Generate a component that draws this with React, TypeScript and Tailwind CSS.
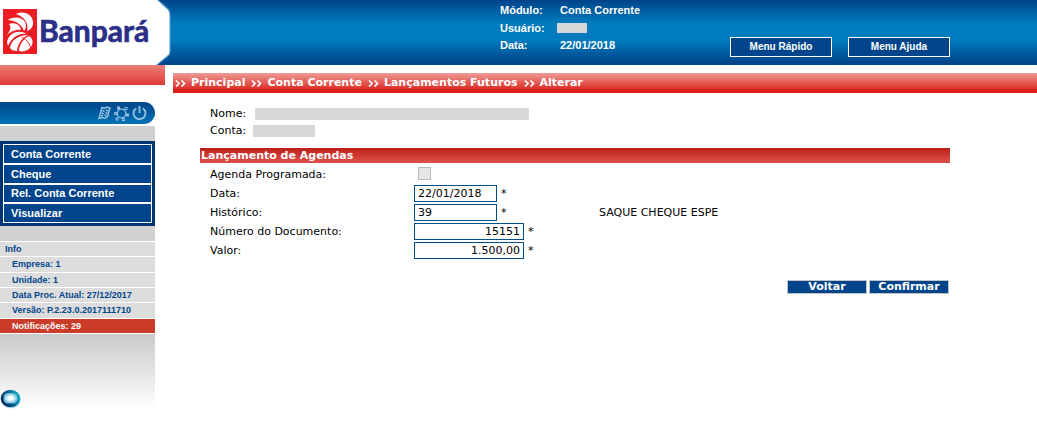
import { useState } from "react";

const crumbs = ["Principal", "Conta Corrente", "Lançamentos Futuros", "Alterar"];
const menu = ["Conta Corrente", "Cheque", "Rel. Conta Corrente", "Visualizar"];
const info = ["Empresa: 1", "Unidade: 1", "Data Proc. Atual: 27/12/2017", "Versão: P.2.23.0.2017111710"];

function Logo() {
  return (
    <svg width="171" height="65" viewBox="0 0 171 65" className="block shrink-0" role="img" aria-label="Banpará">
      <path d="M0 0H159L169 9Q170.500 11 170.500 15V51Q170.500 54 169 56L158 65H0Z" fill="#7fb6dc" opacity="0.6" />
      <path d="M0 0H157L168 10Q169.500 12 169.500 15V51Q169.500 54 168 55L156 65H0Z" fill="#fff" />
      <rect x="3" y="9" width="34" height="45" fill="#ed1c24" />
      <path d="M16 14C24 10 34 15 33 24C33 27 30 30 27 31C29 24 25 17 16 14Z" fill="#fff" />
      <path d="M8 20C16 15 25 18 26 25C26 28 25 30 24 31C22 25 17 21 8 20Z" fill="#fff" />
      <path d="M9 24C15 22 20 25 21 30C16 29 10 32 7 35C10 31 12 27 9 24Z" fill="#fff" />
      <path d="M7 42C9 33 18 29 27 34C19 33 12 37 8 46Z" fill="#fff" />
      <path d="M10 48C11 40 19 35 28 35C22 38 18 43 17 51C14 51 11 50 10 48Z" fill="#fff" />
      <path d="M19 51C19 45 23 39 29 36C33 38 34 44 30 48C27 51 23 52 19 51Z" fill="#fff" />
      <path d="M22 37C27 40 30 44 31 49" fill="none" stroke="#ed1c24" strokeWidth="1" />
      <text x="39" y="42" fontFamily="Lato, sans-serif" fontSize="30" fontWeight="700" fill="#2b2f87" stroke="#2b2f87" strokeWidth="0.7">
        Banpará
      </text>
    </svg>
  );
}

function NotesIcon() {
  return (
    <svg width="13" height="14" viewBox="0 0 13 14" fill="none" stroke="#91c2e2">
      <path d="M4 1.500 6.500 2.500 8.500 1 12 2 9.500 10.500 7 12.500 4 11.500 1 12.500 2.500 7Z" strokeWidth="1.500" />
      <path d="M4.500 4.500 6.500 5.500M8 4 10 5M3.800 7 5.800 8M7.500 6.500 9.500 7.500M3 9.500 5 10M6.500 9 8.500 10" strokeWidth="1.700" />
    </svg>
  );
}

function NetworkIcon() {
  return (
    <svg width="15" height="15" viewBox="0 0 15 15" fill="none" stroke="#91c2e2">
      <circle cx="7.500" cy="7.500" r="4.300" strokeWidth="1.300" />
      <g fill="#05589d" strokeWidth="1">
        <rect x="3.500" y="1" width="2" height="2" />
        <rect x="11" y="1.500" width="2" height="2" />
        <rect x="0.500" y="6.500" width="2" height="2" />
        <rect x="12.500" y="8" width="2" height="2" />
        <rect x="2" y="12" width="2" height="2" />
        <rect x="8.500" y="12.500" width="2" height="2" />
      </g>
    </svg>
  );
}

function PowerIcon() {
  return (
    <svg width="15" height="15" viewBox="0 0 15 15" fill="none" stroke="#91c2e2" strokeWidth="1.900">
      <path d="M4.300 2.200A6 6 0 1 0 10.700 2.200M7.500 0V7" />
    </svg>
  );
}

function Globe() {
  return (
    <svg width="21" height="20" viewBox="0 0 21 20" className="block">
      <defs>
        <linearGradient id="rim" x1="0" y1="0.7" x2="1" y2="0.3">
          <stop offset="0" stopColor="#041c58" />
          <stop offset="0.5" stopColor="#04608c" />
          <stop offset="1" stopColor="#12b4cc" />
        </linearGradient>
        <radialGradient id="glow">
          <stop offset="0.3" stopColor="#fff" />
          <stop offset="0.7" stopColor="#a5dcea" />
          <stop offset="1" stopColor="#5fb4cf" />
        </radialGradient>
      </defs>
      <ellipse cx="11" cy="10.500" rx="10" ry="9" fill="#bfe3ec" />
      <ellipse cx="10.500" cy="9.500" rx="9.800" ry="8.700" fill="url(#rim)" />
      <rect x="3.500" y="4" width="14" height="10.500" rx="4.500" fill="url(#glow)" />
    </svg>
  );
}

const field = "h-[17px] border border-[#00508f] bg-white px-[3px] text-[11px] leading-[15px] text-black outline-none";
const topButton = "h-5 w-[102px] border border-white bg-[#00448b] text-[10px] leading-[18px] font-bold";
const action = "h-[14px] w-20 border border-[#c4c4c4] bg-[#00448b] text-[11px] leading-3 font-bold text-white";

export default function App() {
  const [date, setDate] = useState("22/01/2018");
  const [history, setHistory] = useState("39");
  const [doc, setDoc] = useState("15151");
  const [value, setValue] = useState("1.500,00");

  return (
    <div className="bg-white font-['Liberation_Sans',Arial,sans-serif] text-black">
      <header className="flex h-[65px] bg-[linear-gradient(#00448b,#007bbd_36%,#007bbd_62%,#00448b_97%)] text-[11px] font-bold text-white">
        <Logo />
        <dl className="ml-[329px] grid w-[230px] shrink-0 grid-cols-[60px_1fr] content-start pt-[2px] leading-[17px]">
          <dt>Módulo:</dt>
          <dd>Conta Corrente</dd>
          <dt className="leading-[18px]">Usuário:</dt>
          <dd className="-ml-[3px] flex items-center">
            <span className="h-[10px] w-[30px] bg-[#d8d8d8]" />
          </dd>
          <dt>Data:</dt>
          <dd>22/01/2018</dd>
        </dl>
        <nav className="flex shrink-0 gap-4 pt-[37px]">
          <button className={topButton}>Menu Rápido</button>
          <button className={topButton}>Menu Ajuda</button>
        </nav>
      </header>

      <div className="flex items-start">
        <aside className="w-[165px] shrink-0 font-bold">
          <div className="h-5 bg-linear-to-b from-[#ec7c79] to-[#dc3530]" />
          <div className="mr-[10px] pt-[17px]">
            <div className="flex h-[22px] items-center justify-end gap-[3px] rounded-r-[11px] bg-linear-to-b from-[#00448b] to-[#0072b5] pr-2">
              <button aria-label="Anotações"><NotesIcon /></button>
              <button aria-label="Rede"><NetworkIcon /></button>
              <button aria-label="Sair"><PowerIcon /></button>
            </div>
            <div className="mt-[2px] h-[15px] bg-[#d1d1d1]" />
            <nav className="bg-[#003575] p-[3px]">
              <div className="grid h-[79px] grid-rows-4">
                {menu.map((m) => (
                  <a key={m} href="#" className="flex min-h-0 items-center border border-white bg-[#00448b] pl-[7px] text-[11px] leading-[14px] text-white">
                    {m}
                  </a>
                ))}
              </div>
            </nav>
            <div className="h-[15px] bg-[#d1d1d1]" />
            <div className="grid h-[93px] grid-rows-6 border-b border-white text-[9px] leading-[14px] text-[#00448b]">
              <div className="border-t border-white bg-[#dddddd] pl-[5px]">Info</div>
              {info.map((i) => (
                <div key={i} className="border-t border-white bg-[#dddddd] pl-3">{i}</div>
              ))}
              <div className="border-t border-white bg-[#cb3b29] pl-3 text-white">Notificações: 29</div>
            </div>
            <div className="flex h-[75px] items-end bg-linear-to-b from-[#cacaca] to-white">
              <Globe />
            </div>
          </div>
        </aside>

        <main className="ml-2 min-w-0 grow pt-2 font-['DejaVu_Sans',Verdana,sans-serif] text-[11px]">
          <nav className="flex h-5 items-center gap-[6px] bg-linear-to-b from-[#ee9b98] via-[#e25650] via-50% to-[#dc1f17] to-85% pl-[2px] font-bold text-white">
            {crumbs.map((c) => (
              <a key={c} href="#" className="flex items-center gap-1">
                <svg width="12" height="8" viewBox="0 0 12 8" fill="none" stroke="white" strokeWidth="1.700">
                  <path d="M1 1.500 4 4.500 1 7.500M6.500 1.500 9.500 4.500 6.500 7.500" />
                </svg>
                {c}
              </a>
            ))}
          </nav>

          <div className="ml-[27px] w-[750px]">
            <div className="grid gap-[3px] pt-[14px] pl-[10px] leading-[14px]">
              <div className="flex items-center gap-[9px]">
                Nome: <span className="h-3 w-[274px] bg-[#d8d8d8]" />
              </div>
              <div className="flex items-center gap-[7px]">
                Conta: <span className="h-3 w-[62px] bg-[#d8d8d8]" />
              </div>
            </div>

            <h1 className="mt-[10px] h-[15px] bg-linear-to-b from-[#bd1d18] to-[#df504a] pl-px text-[11px] leading-[16px] font-bold text-white">
              Lançamento de Agendas
            </h1>

            <form onSubmit={(e) => e.preventDefault()}>
              <div className="grid grid-cols-[204px_185px_1fr] items-center gap-y-[2px] pt-[3px] pl-[10px] leading-[17px]">
                <label htmlFor="agenda">Agenda Programada:</label>
                <div className="col-span-2 flex h-4 items-start pl-1">
                  <input id="agenda" type="checkbox" disabled className="size-[13px] appearance-none border border-[#bbbbbb] bg-[#e6e6e6]" />
                </div>

                <label htmlFor="data">Data:</label>
                <div className="col-span-2 flex items-center gap-1">
                  <input id="data" className={`${field} w-[83px]`} value={date} onChange={(e) => setDate(e.target.value)} />
                  <span>*</span>
                </div>

                <label htmlFor="historico">Histórico:</label>
                <div className="flex items-center gap-1">
                  <input id="historico" className={`${field} w-[83px]`} value={history} onChange={(e) => setHistory(e.target.value)} />
                  <span>*</span>
                </div>
                <span>SAQUE CHEQUE ESPE</span>

                <label htmlFor="documento">Número do Documento:</label>
                <div className="col-span-2 flex items-center gap-1">
                  <input id="documento" className={`${field} w-[110px] text-right`} value={doc} onChange={(e) => setDoc(e.target.value)} />
                  <span>*</span>
                </div>

                <label htmlFor="valor">Valor:</label>
                <div className="col-span-2 flex items-center gap-1">
                  <input id="valor" className={`${field} w-[110px] text-right`} value={value} onChange={(e) => setValue(e.target.value)} />
                  <span>*</span>
                </div>
              </div>
              <div className="mt-[21px] flex justify-end gap-[2px] pr-px">
                <button type="button" className={action}>Voltar</button>
                <button type="submit" className={action}>Confirmar</button>
              </div>
            </form>
          </div>
        </main>
      </div>
    </div>
  );
}
